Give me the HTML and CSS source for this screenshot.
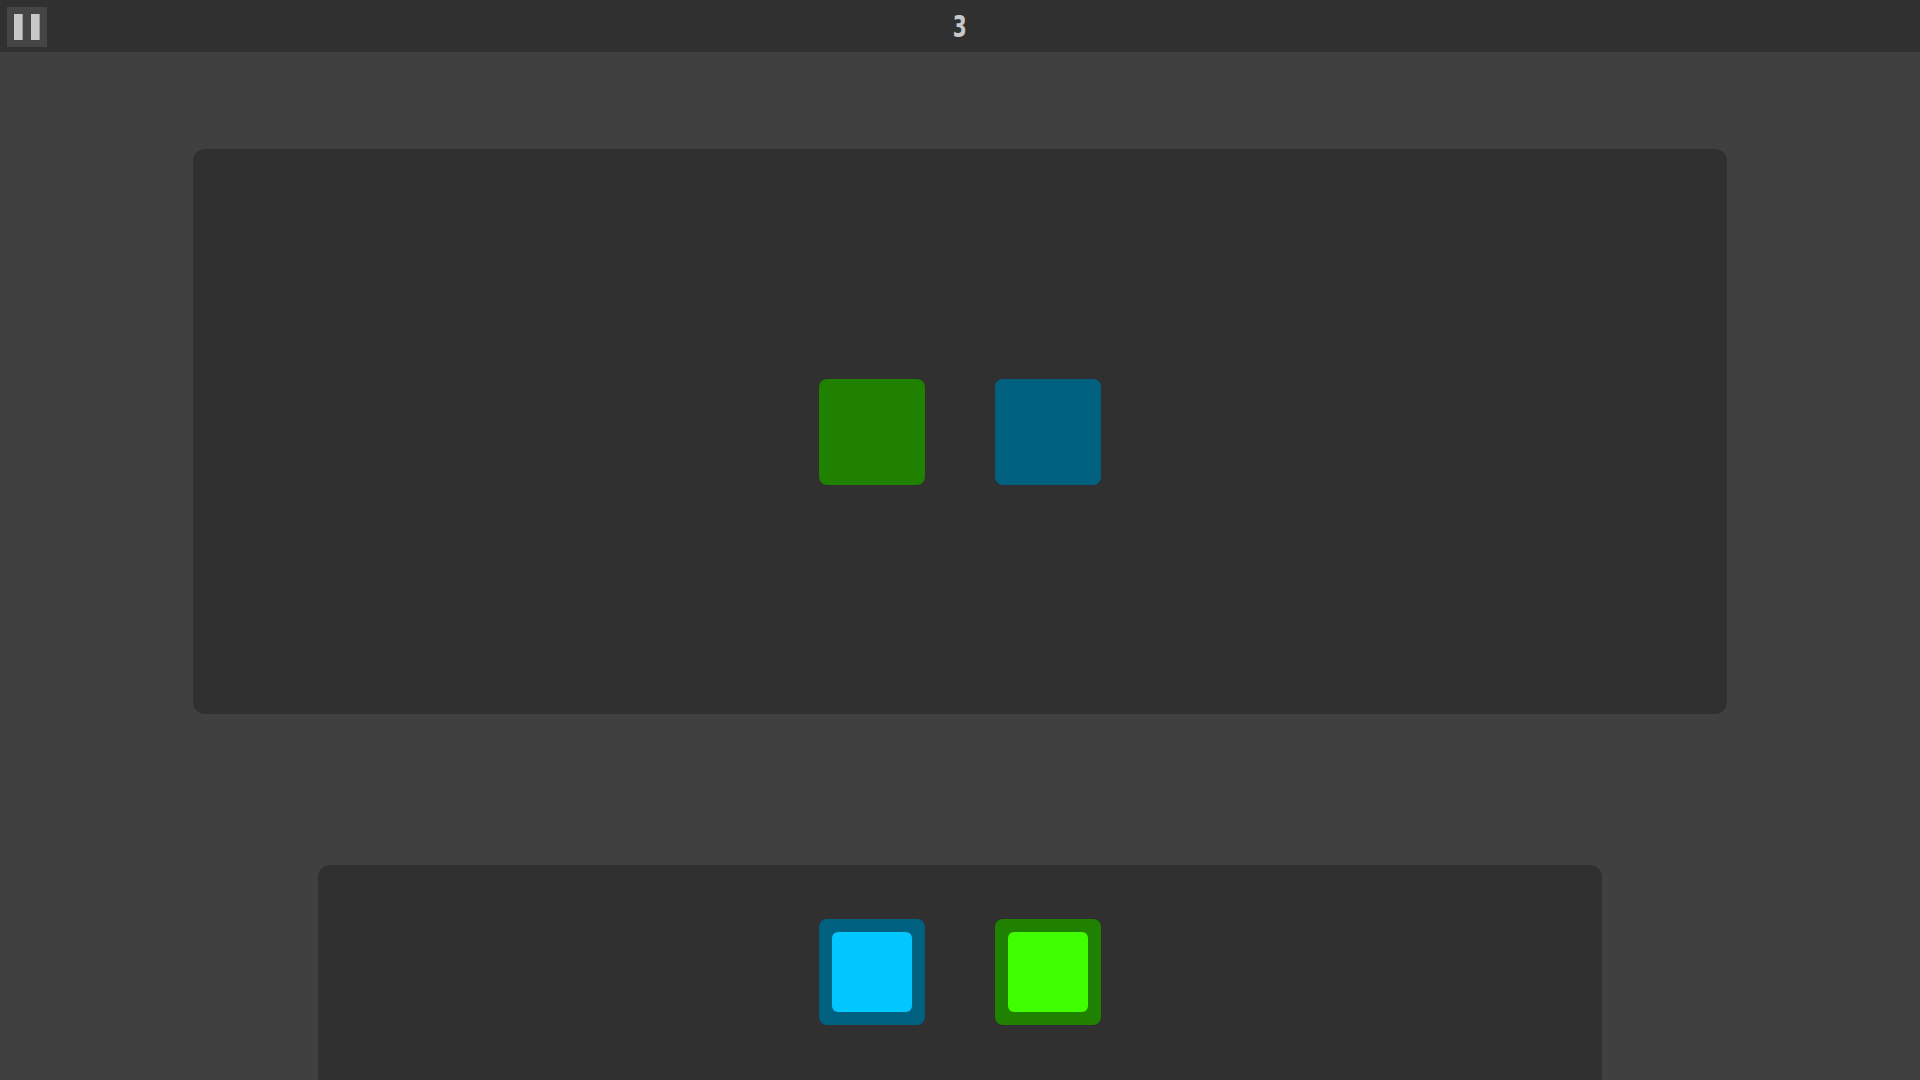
FILE: index.html
```html
<!DOCTYPE html>
<html>
<head>
<meta charset="utf-8">
<link rel="stylesheet" href="styles.css">
</head>
<body>
<header class="topbar">
  <div class="pause"><span class="bar"></span><span class="bar"></span></div>
  <div class="score">3</div>
</header>
<main class="stage">
  <section class="target">
    <div class="tile tile-green"></div>
    <div class="tile tile-blue"></div>
  </section>
  <section class="tray">
    <div class="tile tile-blue framed"><div class="inner inner-blue"></div></div>
    <div class="tile tile-green framed"><div class="inner inner-green"></div></div>
  </section>
</main>
</body>
</html>
```
FILE: styles.css
```css
html, body {
  margin: 0;
  padding: 0;
  width: 1920px;
  height: 1080px;
  overflow: hidden;
  background: #404040;
  font-family: "DejaVu Sans Condensed", "DejaVu Sans", sans-serif;
}
.topbar {
  height: 52px;
  background: #303030;
  display: flex;
  align-items: center;
  justify-content: center;
  position: relative;
}
.pause {
  position: absolute;
  left: 7px;
  top: 7px;
  width: 40px;
  height: 40px;
  background: #454545;
  display: flex;
  justify-content: center;
  align-items: center;
  gap: 8px;
}
.pause .bar {
  width: 9px;
  height: 26px;
  background: #c8c8c8;
  box-shadow: inset -1px 0 0 #9a9a9a;
}
.score {
  color: #c8c8c8;
  font-weight: bold;
  font-size: 31px;
  line-height: 1;
  transform: scaleX(0.72);
}
.stage {
  display: flex;
  flex-direction: column;
  align-items: center;
}
.target {
  margin-top: 97px;
  width: 1534px;
  height: 565px;
  background: #303030;
  border-radius: 12px;
  display: flex;
  justify-content: center;
  align-items: center;
  gap: 70px;
}
.tray {
  margin-top: 151px;
  width: 1284px;
  height: 215px;
  background: #303030;
  border-radius: 12px 12px 0 0;
  display: flex;
  justify-content: center;
  align-items: flex-start;
  gap: 70px;
  padding-top: 54px;
  box-sizing: border-box;
}
.tile {
  width: 106px;
  height: 106px;
  border-radius: 8px;
  box-sizing: border-box;
}
.tile-green { background: #208000; }
.tile-blue { background: #006080; }
.framed {
  padding: 13px;
}
.inner {
  width: 80px;
  height: 80px;
  border-radius: 6px;
}
.inner-blue { background: #00c8ff; }
.inner-green { background: #40ff00; }
```
